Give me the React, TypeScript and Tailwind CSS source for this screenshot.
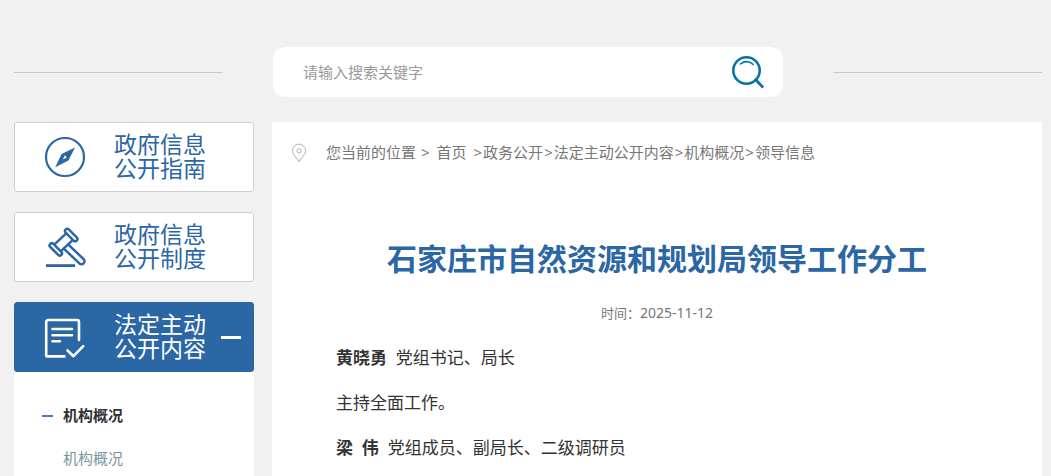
import React from "react";

const CompassIcon = () => (
  <svg viewBox="0 0 42 42" className="size-[42px]" fill="none" aria-hidden="true">
    <circle cx="21" cy="21" r="19" stroke="#2b66a5" strokeWidth="2.2" />
    <path
      fillRule="evenodd"
      fill="#2b66a5"
      d="M31 11.5 24.4 24.6 11.2 31.2 17.6 18ZM20.8 19.2 18.8 23.4 22.8 21.4Z"
    />
  </svg>
);

const GavelIcon = () => (
  <svg
    viewBox="0 0 42 42"
    className="size-[42px] overflow-visible"
    fill="none"
    stroke="#2b66a5"
    strokeWidth="2.5"
    strokeLinecap="round"
    strokeLinejoin="round"
    aria-hidden="true"
  >
    <rect x="-7.8" y="-2.2" width="15.6" height="4.4" rx="2.2" transform="translate(27.2 9) rotate(45)" />
    <rect x="-7.8" y="-2.2" width="15.6" height="4.4" rx="2.2" transform="translate(11.8 23.4) rotate(45)" />
    <path d="M22 7.6 11 17.8M28.6 14.2 17.8 24.4" />
    <path d="M19.8 22.6 35.4 37.4a2.8 2.8 0 0 0 4.2-4.2L24.2 18.4" />
    <path d="M2 39.6H31" strokeLinecap="butt" strokeWidth="2.8" />
  </svg>
);

const DocumentIcon = () => (
  <svg
    viewBox="0 0 42 42"
    className="size-[42px]"
    fill="none"
    stroke="#fff"
    strokeWidth="2.6"
    strokeLinecap="round"
    strokeLinejoin="round"
    aria-hidden="true"
  >
    <path d="M20.5 40.4H2.8a.6.6 0 0 1-.6-.6V6a2 2 0 0 1 2-2H33a2 2 0 0 1 2 2V24" />
    <path d="M8.5 13H28M8.5 19.2H28M8.5 25.2H16" />
    <path d="M23.5 34.5 29.5 40.2 39.2 30.2" />
  </svg>
);

const SearchIcon = () => (
  <svg viewBox="0 0 34 34" className="size-[34px]" fill="none" stroke="#0a70a8" aria-hidden="true">
    <circle cx="15.5" cy="15.5" r="13.2" strokeWidth="2.6" />
    <path d="M25 25 31.2 31.6" strokeWidth="2.8" strokeLinecap="square" />
    <path d="M9.6 8.9Q15.8 4.2 22.2 9.3" strokeWidth="1.6" strokeLinecap="round" />
  </svg>
);

const PinIcon = () => (
  <svg viewBox="0 0 16 20" className="h-5 w-4" fill="none" stroke="#c4c4c4" strokeWidth="1.2" aria-hidden="true">
    <path d="M8 18.4C4.6 14.6 1.4 11 1.4 7.8a6.6 6.6 0 0 1 13.2 0C14.6 11 11.4 14.6 8 18.4Z" />
    <circle cx="8" cy="7.8" r="2" />
  </svg>
);

const MENU = [
  { icon: <CompassIcon />, lines: ["政府信息", "公开指南"], active: false },
  { icon: <GavelIcon />, lines: ["政府信息", "公开制度"], active: false },
  { icon: <DocumentIcon />, lines: ["法定主动", "公开内容"], active: true },
];

const CRUMBS = ["政务公开", "法定主动公开内容", "机构概况", "领导信息"];

const STAFF = [
  { name: "黄晓勇", title: "党组书记、局长", duty: "主持全面工作。" },
  { name: "梁\u00a0\u00a0伟", title: "党组成员、副局长、二级调研员", duty: "" },
];

const Separator = () => <span className="px-px">&gt;</span>;

export default function App() {
  return (
    <div
      lang="zh-CN"
      className="flex h-screen flex-col overflow-hidden bg-[#f1f1f1] pr-[9px] pl-[14px] font-['Noto_Sans','Noto_Sans_CJK_SC',sans-serif]"
    >
      <header className="flex shrink-0 items-center gap-[50px] pt-[47px] pb-[25px]">
        <div className="h-px flex-1 bg-[#c9c9c9]" />
        <form
          className="flex h-[50px] w-[510px] items-center rounded-xl bg-white pr-[18px] pl-[30px]"
          onSubmit={(e) => e.preventDefault()}
        >
          <input
            type="text"
            aria-label="请输入搜索关键字"
            placeholder="请输入搜索关键字"
            className="min-w-0 flex-1 text-[15px] leading-6 text-[#333] outline-none placeholder:text-[#999]"
          />
          <button type="submit" aria-label="搜索" className="cursor-pointer">
            <SearchIcon />
          </button>
        </form>
        <div className="h-px flex-1 bg-[#c9c9c9]" />
      </header>

      <div className="flex min-h-0 flex-1 gap-[18px]">
        <aside className="flex w-60 shrink-0 flex-col">
          <nav className="flex shrink-0 flex-col gap-5">
            {MENU.map((item) => (
              <a
                key={item.lines.join("")}
                href="#"
                className={
                  item.active
                    ? "flex h-[70px] items-center rounded-[3px] border border-[#2b66a5] bg-[#2b66a5] pr-3 pl-[29px] text-white"
                    : "flex h-[70px] items-center rounded-[3px] border border-[#d0d0d0] bg-white pr-3 pl-[29px] text-[#2b66a5]"
                }
              >
                {item.icon}
                <span className="ml-7 flex-1 pb-[3px] text-[23px] leading-6">
                  <span className="block">{item.lines[0]}</span>
                  <span className="block">{item.lines[1]}</span>
                </span>
                {item.active && <span className="h-[3px] w-5 bg-white" />}
              </a>
            ))}
          </nav>
          <ul className="min-h-0 flex-1 bg-white pt-[22px] pl-7 text-[15px] leading-[43px]">
            <li>
              <a href="#" className="flex items-center font-bold text-[#333]">
                <span className="mr-[10px] h-0.5 w-[11px] bg-[#4a7db8]" />
                机构概况
              </a>
            </li>
            <li className="pl-[21px]">
              <a href="#" className="text-[#7a929e]">
                机构概况
              </a>
            </li>
          </ul>
        </aside>

        <main className="min-w-0 flex-1 bg-white">
          <nav
            aria-label="面包屑"
            className="flex h-[62px] items-center pl-[19px] text-[15px] leading-6 text-[#777]"
          >
            <PinIcon />
            <p className="ml-[19px] pb-0.5">
              您当前的位置 <Separator />
              <a href="#" className="px-1.5">首页</a>
              {CRUMBS.map((crumb) => (
                <React.Fragment key={crumb}>
                  <Separator />
                  <a href="#">{crumb}</a>
                </React.Fragment>
              ))}
            </p>
          </nav>

          <article>
            <h1 className="pt-[51px] text-center text-3xl leading-[48px] font-bold text-[#2b66a5]">
              石家庄市自然资源和规划局领导工作分工
            </h1>
            <p className="pt-[18px] text-center text-[13px] leading-6 text-[#777]">
              时间：<time className="text-sm leading-6">2025-11-12</time>
            </p>
            <div className="px-16 pt-[10px] text-[17px] leading-[45px] text-[#333]">
              {STAFF.map((person) => (
                <React.Fragment key={person.name}>
                  <p>
                    <strong>{person.name}</strong>&nbsp;&nbsp;{person.title}
                  </p>
                  {person.duty && <p>{person.duty}</p>}
                </React.Fragment>
              ))}
            </div>
          </article>
        </main>
      </div>
    </div>
  );
}
